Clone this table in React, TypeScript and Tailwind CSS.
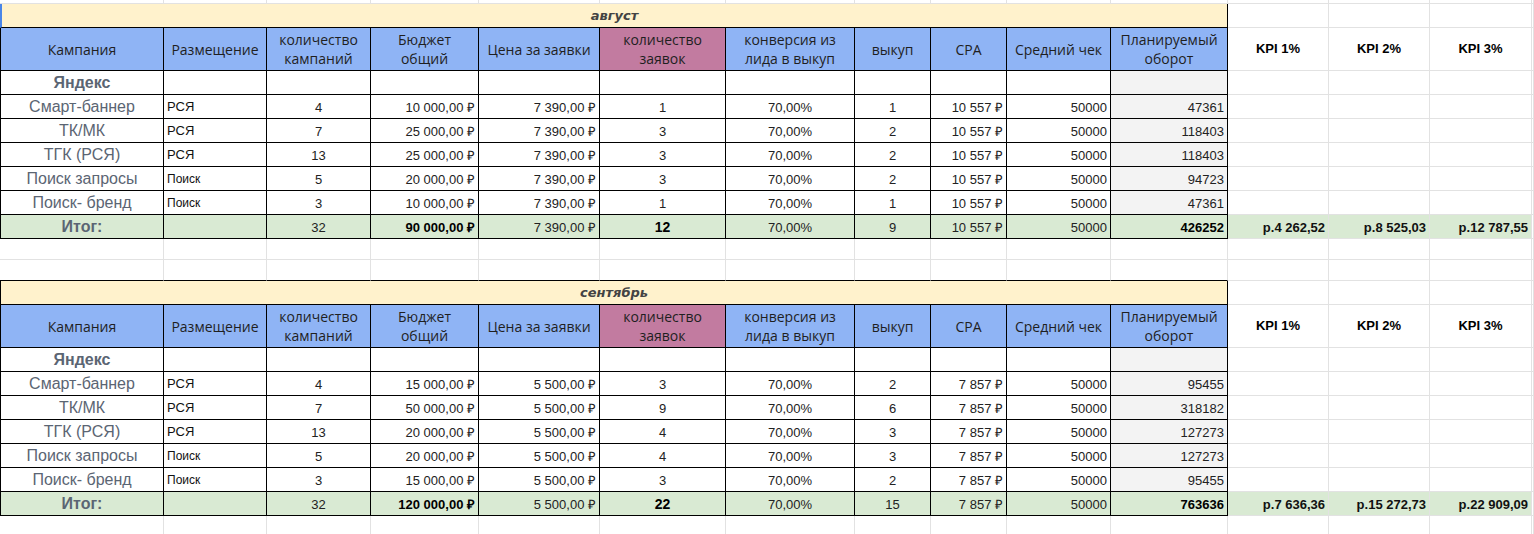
import type { ReactNode } from 'react'

const GRID =
  'grid grid-cols-[164px_103px_104px_108px_121px_126px_129px_76px_76px_104px_117px_101px_101px_102px_2px]'

const B = 'border-r border-b border-black'
const G = 'border-r border-b border-[#e2e2e2]'

const NUM = "font-['Liberation_Sans',Arial,sans-serif] text-[13px] leading-[15px] text-[#222]"
const CAMP = "font-['Liberation_Sans',Arial,sans-serif] text-[16px] text-[#5b6573]"
const HEAD = "font-['Open_Sans',sans-serif] text-[14px] leading-[19px] text-[#1f1f1f]"

type Row = [string, string, string, string, string, string, string, string, string, string, string]

interface Section {
  month: string
  first?: boolean
  rows: Row[]
  total: Row
  kpi: [string, string, string]
}

const sections: Section[] = [
  {
    month: 'август',
    first: true,
    rows: [
      ['Смарт-баннер', 'РСЯ', '4', '10 000,00 ₽', '7 390,00 ₽', '1', '70,00%', '1', '10 557 ₽', '50000', '47361'],
      ['ТК/МК', 'РСЯ', '7', '25 000,00 ₽', '7 390,00 ₽', '3', '70,00%', '2', '10 557 ₽', '50000', '118403'],
      ['ТГК (РСЯ)', 'РСЯ', '13', '25 000,00 ₽', '7 390,00 ₽', '3', '70,00%', '2', '10 557 ₽', '50000', '118403'],
      ['Поиск запросы', 'Поиск', '5', '20 000,00 ₽', '7 390,00 ₽', '3', '70,00%', '2', '10 557 ₽', '50000', '94723'],
      ['Поиск- бренд', 'Поиск', '3', '10 000,00 ₽', '7 390,00 ₽', '1', '70,00%', '1', '10 557 ₽', '50000', '47361'],
    ],
    total: ['Итог:', '', '32', '90 000,00 ₽', '7 390,00 ₽', '12', '70,00%', '9', '10 557 ₽', '50000', '426252'],
    kpi: ['р.4 262,52', 'р.8 525,03', 'р.12 787,55'],
  },
  {
    month: 'сентябрь',
    rows: [
      ['Смарт-баннер', 'РСЯ', '4', '15 000,00 ₽', '5 500,00 ₽', '3', '70,00%', '2', '7 857 ₽', '50000', '95455'],
      ['ТК/МК', 'РСЯ', '7', '50 000,00 ₽', '5 500,00 ₽', '9', '70,00%', '6', '7 857 ₽', '50000', '318182'],
      ['ТГК (РСЯ)', 'РСЯ', '13', '20 000,00 ₽', '5 500,00 ₽', '4', '70,00%', '3', '7 857 ₽', '50000', '127273'],
      ['Поиск запросы', 'Поиск', '5', '20 000,00 ₽', '5 500,00 ₽', '4', '70,00%', '3', '7 857 ₽', '50000', '127273'],
      ['Поиск- бренд', 'Поиск', '3', '15 000,00 ₽', '5 500,00 ₽', '3', '70,00%', '2', '7 857 ₽', '50000', '95455'],
    ],
    total: ['Итог:', '', '32', '120 000,00 ₽', '5 500,00 ₽', '22', '70,00%', '15', '7 857 ₽', '50000', '763636'],
    kpi: ['р.7 636,36', 'р.15 272,73', 'р.22 909,09'],
  },
]

function Cell({ className = '', children }: { className?: string; children?: ReactNode }) {
  return <div className={`flex min-w-0 overflow-hidden whitespace-nowrap ${className}`}>{children}</div>
}

// plain spreadsheet row with only the light grid lines
function EmptyRow({ h, blackBottom = false }: { h: string; blackBottom?: boolean }) {
  return (
    <div className={`${GRID} ${h}`}>
      {Array.from({ length: 15 }).map((_, i) => (
        <Cell
          key={i}
          className={
            blackBottom && i < 11
              ? 'border-r border-b border-r-[#e2e2e2] border-b-black'
              : G
          }
        />
      ))}
    </div>
  )
}

const headers: { t: ReactNode; pink?: boolean }[] = [
  { t: 'Кампания' },
  { t: 'Размещение' },
  { t: <>количество<br />кампаний</> },
  { t: <>Бюджет<br />общий</> },
  { t: 'Цена за заявки' },
  { t: <>количество<br />заявок</>, pink: true },
  { t: <>конверсия из<br />лида в выкуп</> },
  { t: 'выкуп' },
  { t: 'CPA' },
  { t: 'Средний чек' },
  { t: <>Планируемый<br />оборот</> },
]

function DataRow({ r, total }: { r: Row; total?: boolean }) {
  const bg = total ? 'bg-[#d9ead3]' : 'bg-white'
  const right = `${B} ${bg} ${NUM} items-end justify-end pb-[3px] pr-[3px]`
  const center = `${B} ${bg} ${NUM} items-end justify-center pb-[3px]`
  return (
    <>
      <Cell className={`${B} border-l ${bg} ${CAMP} items-center justify-center ${total ? 'font-bold' : ''}`}>
        {r[0]}
      </Cell>
      <Cell
        className={`${B} ${bg} font-['Liberation_Sans',Arial,sans-serif] text-[#111] items-end pb-[2px] pl-[3px] ${
          r[1] === 'Поиск' ? 'text-[12px]' : 'text-[13px]'
        }`}
      >
        {r[1]}
      </Cell>
      <Cell className={center}>{r[2]}</Cell>
      <Cell className={`${right} ${total ? 'font-bold !text-black' : ''}`}>{r[3]}</Cell>
      <Cell className={right}>{r[4]}</Cell>
      <Cell className={`${center} ${total ? 'font-bold !text-[14px] !text-black' : ''}`}>{r[5]}</Cell>
      <Cell className={center}>{r[6]}</Cell>
      <Cell className={center}>{r[7]}</Cell>
      <Cell className={right}>{r[8]}</Cell>
      <Cell className={right}>{r[9]}</Cell>
      <Cell
        className={`${B} ${total ? 'bg-[#d9ead3] font-bold !text-black' : 'bg-[#f3f3f3]'} ${NUM} items-end justify-end pb-[3px] pr-[3px]`}
      >
        {r[10]}
      </Cell>
    </>
  )
}

function MonthBlock({ s }: { s: Section }) {
  return (
    <>
      <div className={`${GRID} h-[24px]`}>
        <Cell
          className={`col-span-11 ${B} ${
            s.first ? 'border-l-2 border-l-[#4a86e8]' : 'border-l'
          } bg-[#fff2cc] items-center justify-center font-['DejaVu_Sans',sans-serif] text-[13px] font-bold italic text-[#434343]`}
        >
          {s.month}
        </Cell>
        <Cell className={G} />
        <Cell className={G} />
        <Cell className={G} />
        <Cell className={G} />
      </div>

      <div className={`${GRID} h-[43px]`}>
        {headers.map((h, i) => (
          <Cell
            key={i}
            className={`${B} ${i === 0 ? 'border-l' : ''} ${
              h.pink ? 'bg-[#c27ba0]' : 'bg-[#8fb4f5]'
            } ${HEAD} items-center justify-center text-center`}
          >
            <span>{h.t}</span>
          </Cell>
        ))}
        {['KPI 1%', 'KPI 2%', 'KPI 3%'].map(k => (
          <Cell
            key={k}
            className={`${G} items-center justify-center font-['Liberation_Sans',Arial,sans-serif] text-[13px] font-bold text-black`}
          >
            {k}
          </Cell>
        ))}
        <Cell className={G} />
      </div>

      <div className={`${GRID} h-[24px]`}>
        <Cell className={`${B} border-l bg-white ${CAMP} font-bold items-center justify-center`}>Яндекс</Cell>
        {Array.from({ length: 9 }).map((_, i) => (
          <Cell key={i} className={`${B} bg-white`} />
        ))}
        <Cell className={`${B} bg-[#f3f3f3]`} />
        <Cell className={G} />
        <Cell className={G} />
        <Cell className={G} />
        <Cell className={G} />
      </div>

      {s.rows.map((r, i) => (
        <div key={i} className={`${GRID} h-[24px]`}>
          <DataRow r={r} />
          <Cell className={G} />
          <Cell className={G} />
          <Cell className={G} />
          <Cell className={G} />
        </div>
      ))}

      <div className={`${GRID} h-[24px]`}>
        <DataRow r={s.total} total />
        {s.kpi.map(k => (
          <Cell
            key={k}
            className={`${G} bg-[#d9ead3] items-end justify-end pb-[3px] pr-[3px] font-['Liberation_Sans',Arial,sans-serif] text-[13px] leading-[15px] font-bold text-[#111]`}
          >
            {k}
          </Cell>
        ))}
        <Cell className={G} />
      </div>
    </>
  )
}

export default function App() {
  return (
    <div className="w-[1534px] h-[534px] overflow-hidden bg-white">
      <EmptyRow h="h-[4px]" />
      <MonthBlock s={sections[0]} />
      <EmptyRow h="h-[21px]" />
      <EmptyRow h="h-[21px]" blackBottom />
      <MonthBlock s={sections[1]} />
      <EmptyRow h="h-[21px]" />
    </div>
  )
}
